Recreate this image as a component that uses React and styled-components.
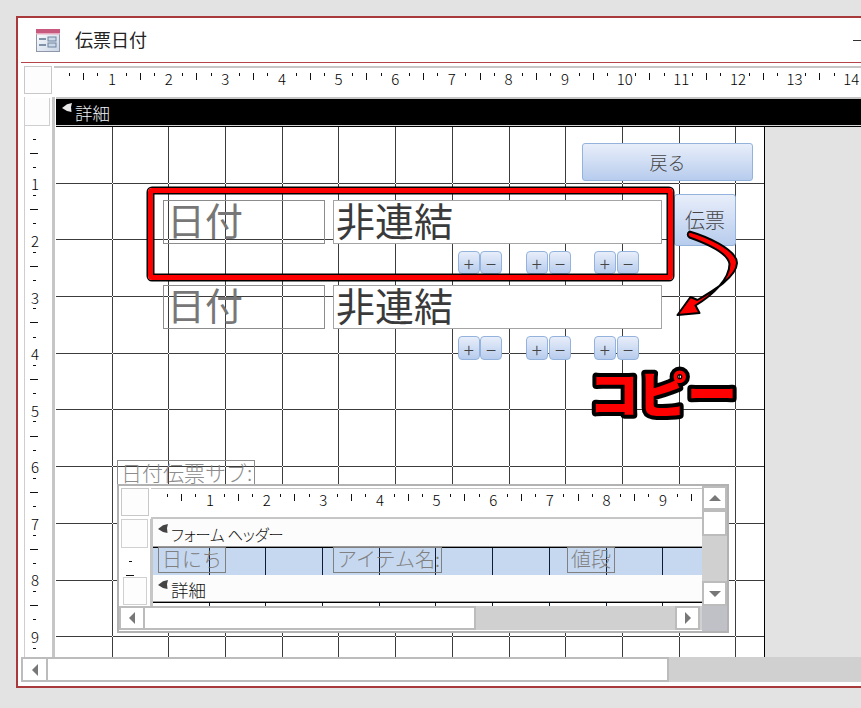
import React from "react";
import styled, { createGlobalStyle } from "styled-components";

const CJK = `"Noto Sans CJK JP", "Liberation Sans", sans-serif`;

const Global = createGlobalStyle`
  html, body { margin: 0; padding: 0; width: 861px; height: 708px; overflow: hidden; background: #e3e3e3; font-family: ${CJK}; }
  #root { width: 861px; height: 708px; overflow: hidden; }
  * { box-sizing: border-box; }
`;

const Page = styled.div`
  width: 861px; height: 708px; overflow: hidden; padding: 16px 0 0 16px; background: #e3e3e3;
`;
const Window = styled.div`
  width: 1000px; height: 672px; border: 2px solid #a83a3c; background: #fff;
  display: flex; flex-direction: column;
`;
const TitleBar = styled.div`
  width: 843px; height: 44px; flex: none; display: flex; align-items: center; padding-left: 18px; gap: 15px;
`;
const TitleText = styled.span`
  font-size: 18px; color: #222; line-height: 1; font-weight: 400; margin-top: -2px;
`;
const Minimize = styled.span`
  margin-left: auto; width: 8px; height: 1px; background: #333; margin-top: 1px;
`;
const TitleRule = styled.div`
  height: 1px; flex: none; margin-left: 3px; background: #b5444a;
`;
const Designer = styled.div`
  flex: none; height: 594px; padding: 3px 0 0 6px; display: flex; flex-direction: column;
`;
const TopRow = styled.div`
  height: 31px; flex: none; display: flex; gap: 2px;
`;
const Corner = styled.div`
  width: 28px; height: 28px; flex: none; background: #fdfdfd; border: 1px solid #c8c8c8;
`;
const HRuler = styled.div`
  flex: 1; height: 31px; border-top: 2px solid #c6c6c6; padding: 5px 0 0 8.5px; display: flex; align-items: flex-start; overflow: hidden;
`;
const RulerCell = styled.div`
  width: 14.165px; flex: none; display: flex; justify-content: center; height: 14px; position: relative;
`;
const TickV = styled.i`
  display: block; width: 1px; height: ${p => (p.$long ? 7 : 3)}px; background: #111;
`;
const Digit = styled.span`
  font-size: 15px; font-weight: 300; line-height: 12px; color: #000;
  white-space: nowrap; margin-left: ${p => (p.$wide ? 6 : 0)}px;
`;
const BodyRow = styled.div`
  flex: 1; display: flex; min-height: 0;
`;
const VRuler = styled.div`
  width: 31px; flex: none; border-left: 1px solid #cfcfcf; border-right: 3px solid #c6c6c6; overflow: hidden; padding-top: 1px;
`;
const VBox = styled.div`
  height: 28px; width: 25px; border: 1px solid #cfcfcf; background: #fdfdfd; border-left: none; border-top: none;
`;
const VTicks = styled.div`
  margin-top: 6px; display: flex; flex-direction: column;
`;
const VCell = styled.div`
  height: 14.15px; flex: none; display: flex; align-items: center; justify-content: center; width: 18px;
  position: relative;
`;
const TickH = styled.i`
  display: block; height: 1px; width: ${p => (p.$long ? 8 : 3)}px; background: #111;
`;
const VDigit = styled.span`
  font-size: 15px; font-weight: 300; line-height: 14px; color: #000; position: relative; top: 3px; left: 1px;
`;
const Main = styled.div`
  flex: 1; min-width: 0; display: flex; flex-direction: column; border-top: 2px solid #c6c6c6; margin-left: 1px;
`;
const DetailHeader = styled.div`
  height: 27px; flex: none; background: #000; border-bottom: 1px solid #d4d4d4; display: flex; align-items: flex-start; padding: 4px 0 0 6px; gap: 3px;
  color: #eef2f6; font-size: 17.5px; line-height: 20px; font-weight: 300;
`;
const Content = styled.div`
  flex: 1; display: flex; min-height: 0; border-top: 1px solid #000;
`;
const Canvas = styled.div`
  width: 709px; flex: none; position: relative; border-right: 1px solid #000; background: #fff; overflow: hidden;
`;
const Filler = styled.div`
  flex: 1; background: #e3e3e3;
`;
const Layer = styled.svg`
  position: absolute; left: 0; top: 0; display: block;
`;
const ScrollRow = styled.div`
  height: ${p => p.$h || 25}px; flex: none; display: flex; background: #d0d0d0; margin-left: ${p => p.$ml || 0}px;
`;
const ScrollBtn = styled.div`
  width: ${p => p.$w}px; height: ${p => p.$h}px; flex: none; background: #fff; border: 2px solid #bcbcbc;
  display: flex; align-items: center; justify-content: center;
`;
const ScrollThumb = styled.div`
  width: ${p => p.$w}px; height: ${p => p.$h || "auto"}px; flex: none; background: #fff; border: 2px solid #bcbcbc; border-left-width: ${p => (p.$v ? 2 : 0)}px;
`;
const Track = styled.div`
  flex: 1; background: #d0d0d0;
`;
const EndGap = styled.div`
  width: 2px; flex: none; background: #d0d0d0;
`;
const Tri = styled.i`
  display: block; width: 0; height: 0; border-style: solid; border-color: transparent;
  ${p => p.$d === "left" && "border-width: 6px 6px 6px 0; border-right-color: #777;"}
  ${p => p.$d === "right" && "border-width: 6px 0 6px 6px; border-left-color: #777;"}
  ${p => p.$d === "up" && "border-width: 0 6px 6px 6px; border-bottom-color: #777;"}
  ${p => p.$d === "down" && "border-width: 6px 6px 0 6px; border-top-color: #777;"}
`;
const WhiteGap = styled.div`
  flex: 1; background: #fff;
`;

/* Items on the free design canvas */
const Placed = styled.div`
  position: absolute;
  left: ${p => p.$x - 56}px; top: ${p => p.$y - 127}px;
  width: ${p => p.$w}px; height: ${p => p.$h}px;
`;
const LabelCtl = styled(Placed)`
  border: 1px solid #8c8c8c; color: #777; font-size: 38px; line-height: 36px; font-weight: 400; padding-left: 3px; white-space: nowrap;
`;
const TextCtl = styled(Placed)`
  border: 1px solid #a4a4a4; background: #fff; color: #3a3a3a; font-size: 39px; line-height: 36px; font-weight: 400; padding-left: 2px; white-space: nowrap;
`;
const BlueBtn = styled(Placed)`
  border: 1px solid #93b3dc; border-radius: ${p => p.$r || 3}px;
  background: linear-gradient(#e8eefa, #b7cced);
  color: #444; display: flex; align-items: center; justify-content: center; font-weight: 300; line-height: 1;
  font-size: ${p => p.$fs}px;
`;
const RedFrame = styled(Placed)`
  border: 5px solid #f00; border-radius: 4px; box-shadow: 0 0 0 1.5px #000, inset 0 0 0 1.5px #000;
`;
const SubLabel = styled(Placed)`
  border: 1px solid #8c8c8c; color: #8c8c8c; font-size: 21px; line-height: 23px; font-weight: 300; padding-left: 3px; white-space: nowrap;
`;

/* Subform */
const Subform = styled(Placed)`
  border: 2px solid #b2b2b2; background: #fff; display: grid; grid-template-columns: 1fr 25px; grid-template-rows: 120px 1fr;
`;
const SubMain = styled.div`
  display: flex; flex-direction: column; min-width: 0; overflow: hidden;
`;
const SubTop = styled.div`
  height: 33px; flex: none; display: flex; padding: 2px 0 0 2px; gap: 2px;
`;
const SubRuler = styled.div`
  flex: 1; border-top: 1px solid #c6c6c6; border-bottom: 2px solid #c6c6c6; padding: 5px 0 0 9.5px; display: flex; overflow: hidden; height: 31px;
`;
const SubBody = styled.div`
  flex: 1; display: flex; min-height: 0;
`;
const SubVRuler = styled.div`
  width: 34px; flex: none; border-right: 3px solid #c6c6c6; display: flex; flex-direction: column; padding-left: 2px;
`;
const SubVTicks = styled.div`
  height: 29px; flex: none; padding-top: 6px; display: flex; flex-direction: column;
`;
const SubBox = styled.div`
  width: ${p => p.$w}px; flex: none; height: ${p => p.$h}px; margin-left: ${p => p.$ml || 0}px; border: 1px solid #d0d0d0; background: #fdfdfd;
`;
const SubSections = styled.div`
  flex: 1; min-width: 0; display: flex; flex-direction: column;
`;
const SubHead = styled.div`
  height: ${p => p.$h}px; flex: none; background: #fcfcfc; display: flex; align-items: flex-start; padding: 5px 0 0 5px; gap: 3px;
  font-size: ${p => p.$fs}px; letter-spacing: ${p => p.$ls || 0}px; line-height: 20px; color: #111; font-feature-settings: "palt"; white-space: nowrap; font-weight: 300;
  border-bottom: 1px solid #999;
`;
const Band = styled.div`
  height: 28px; flex: none; position: relative; background: #c6d8f0; border-top: 1px solid #000;
`;
const BandLabel = styled.div`
  position: absolute; top: -1px; left: ${p => p.$x - 153}px; width: ${p => p.$w}px; height: 26px;
  border: 1px solid #808080; color: #808080; font-size: 20px; line-height: 22px; font-weight: 300; padding-left: 3px; white-space: nowrap;
`;
const SubFoot = styled.div`
  flex: 1; position: relative; border-top: 1px solid #000; background: #fff; overflow: hidden;
`;
const SubVScroll = styled.div`
  display: flex; flex-direction: column; background: #d0d0d0;
`;
const SubCorner = styled.div`
  background: #c0c1c7;
`;

const GX = [112, 168, 225, 282, 338, 395, 452, 509, 565, 622, 679, 735];
const GY = [183, 239, 296, 353, 409, 466, 523, 580, 636];
const SX = [209, 265, 322, 379, 435, 492, 549, 606, 662];

const GridLines = () => (
  <Layer width="708" height="530" viewBox="56 127 708 530" shapeRendering="crispEdges">
    {GY.map(y => <rect key={y} x="56" y={y} width="708" height="1" fill="#3c3c3c" />)}
    {GX.map(x => <rect key={x} x={x} y="127" width="1" height="530" fill="#3c3c3c" />)}
    {GX.flatMap(x => GY.map(y => <rect key={x + "-" + y} x={x} y={y} width="1" height="1" fill="#fff" />))}
  </Layer>
);

const SubLines = ({ h }) => (
  <Layer width="549" height={h} viewBox={`153 0 549 ${h}`} shapeRendering="crispEdges">
    {SX.map(x => <rect key={x} x={x} y="0" width="1" height={h} fill="#0e1c38" />)}
  </Layer>
);

const Overlay = () => (
  <Layer width="708" height="530" viewBox="56 127 708 530">
    <path
      d="M689.5 231.5 C705 236 736.5 249 737 263 C736.5 277 713 291 697.5 300 L690.5 297 L677.5 315 L699.5 313 L695.5 305.5 C713 295 729.5 279 729.5 264 C728 253 705 243 689.5 237.5 Q686 234.5 689.5 231.5 Z"
      fill="#f00" stroke="#000" strokeWidth="2" strokeLinejoin="round"
    />
    <text
      x="589" y="413" fontSize="50" fontWeight="900" letterSpacing="-1"
      fill="#f00" stroke="#000" strokeWidth="8" strokeLinejoin="round" paintOrder="stroke"
      fontFamily={CJK}
    >
      コピー
    </text>
  </Layer>
);

const Glyph = ({ fill }) => (
  <svg width="10" height="10" viewBox="0 0 10 10" style={{ flex: "none" }}>
    <path d="M0 5 L5 1.2 L10 0 L9 4 L9.5 9 L5 8 Z" fill={fill} />
  </svg>
);

const FormIcon = () => (
  <svg width="24" height="23" viewBox="0 0 24 23" style={{ flex: "none" }}>
    <defs>
      <linearGradient id="ib" x1="0" y1="0" x2="1" y2="1">
        <stop offset="0" stopColor="#ffffff" />
        <stop offset="1" stopColor="#c9d5e6" />
      </linearGradient>
    </defs>
    <rect x="0.5" y="0.5" width="23" height="22" fill="url(#ib)" stroke="#8f97a8" />
    <rect x="0" y="0" width="24" height="4" fill="#c7587e" />
    <rect x="0" y="4" width="24" height="1.5" fill="#e7a9bd" />
    <rect x="3" y="9" width="7" height="2" fill="#8092a8" />
    <rect x="3" y="15" width="7" height="2" fill="#8092a8" />
    <rect x="12" y="8" width="8" height="4" fill="#cdd8e6" stroke="#6f84a0" />
    <rect x="12" y="14" width="8" height="4" fill="#cdd8e6" stroke="#6f84a0" />
  </svg>
);

const hCells = (n) => {
  const out = [];
  for (let i = 0; i < n; i++) {
    const m = i % 4;
    const num = (i + 1) / 4;
    out.push(
      <RulerCell key={i}>
        {m === 3 ? <Digit $wide={num >= 10}>{num}</Digit> : <TickV $long={m === 1} />}
      </RulerCell>
    );
  }
  return out;
};

const vCells = (n) => {
  const out = [];
  for (let i = 0; i < n; i++) {
    const m = i % 4;
    out.push(
      <VCell key={i}>
        {m === 3 ? <VDigit>{(i + 1) / 4}</VDigit> : <TickH $long={m === 1} />}
      </VCell>
    );
  }
  return out;
};

const PlusMinus = ({ y, h }) =>
  [[458, 480], [526, 549], [594, 617]].flatMap(([a, b]) => [
    <BlueBtn key={"p" + a} $x={a} $y={y} $w={21.5} $h={h} $fs={19} $r={4}>+</BlueBtn>,
    <BlueBtn key={"m" + b} $x={b} $y={y} $w={22} $h={h} $fs={19} $r={4}>−</BlueBtn>,
  ]);

export default function App() {
  return (
    <Page>
      <Global />
      <Window>
        <TitleBar>
          <FormIcon />
          <TitleText>伝票日付</TitleText>
          <Minimize />
        </TitleBar>
        <TitleRule />
        <Designer>
          <TopRow>
            <Corner />
            <HRuler>{hCells(56)}</HRuler>
          </TopRow>
          <BodyRow>
            <VRuler>
              <VBox />
              <VTicks>{vCells(37)}</VTicks>
            </VRuler>
            <Main>
              <DetailHeader>
                <Glyph fill="#e8e8e8" />
                <span>詳細</span>
              </DetailHeader>
              <Content>
                <Canvas>
                  <GridLines />
                  <BlueBtn $x={582} $y={143} $w={171} $h={38} $fs={18}>戻る</BlueBtn>
                  <BlueBtn $x={674} $y={194} $w={62} $h={52} $fs={20}>伝票</BlueBtn>
                  <LabelCtl $x={163} $y={200} $w={162} $h={44}>日付</LabelCtl>
                  <TextCtl $x={333} $y={200} $w={329} $h={44}>非連結</TextCtl>
                  <PlusMinus y={251} h={23} />
                  <LabelCtl $x={163} $y={285} $w={162} $h={44}>日付</LabelCtl>
                  <TextCtl $x={333} $y={285} $w={329} $h={44}>非連結</TextCtl>
                  <PlusMinus y={336} h={24} />
                  <RedFrame $x={148} $y={188} $w={525} $h={92} />
                  <Overlay />
                  <SubLabel $x={117} $y={460} $w={138} $h={25}>日付伝票サブ:</SubLabel>
                  <Subform $x={117} $y={484} $w={612} $h={149}>
                    <SubMain>
                      <SubTop>
                        <Corner />
                        <SubRuler>{hCells(39)}</SubRuler>
                      </SubTop>
                      <SubBody>
                        <SubVRuler>
                          <SubBox $w={27} $h={29} />
                          <SubVTicks>
                            <VCell><TickH /></VCell>
                            <VCell><TickH $long /></VCell>
                          </SubVTicks>
                          <SubBox $w={24} $h={28} $ml={2} />
                        </SubVRuler>
                        <SubSections>
                          <SubHead $h={28} $fs={15.5} $ls={-0.3}>
                            <Glyph fill="#444" />
                            <span>フォーム ヘッダー</span>
                          </SubHead>
                          <Band>
                            <SubLines h={27} />
                            <BandLabel $x={158} $w={68}>日にち</BandLabel>
                            <BandLabel $x={333} $w={109}>アイテム名:</BandLabel>
                            <BandLabel $x={567} $w={48}>値段</BandLabel>
                          </Band>
                          <SubHead $h={27} $fs={17.5}>
                            <Glyph fill="#444" />
                            <span>詳細</span>
                          </SubHead>
                          <SubFoot><SubLines h={3} /></SubFoot>
                        </SubSections>
                      </SubBody>
                    </SubMain>
                    <SubVScroll>
                      <ScrollBtn $w={25} $h={24}><Tri $d="up" /></ScrollBtn>
                      <ScrollThumb $v $w={25} $h={26} />
                      <Track />
                      <ScrollBtn $w={25} $h={25}><Tri $d="down" /></ScrollBtn>
                    </SubVScroll>
                    <ScrollRow $h={24}>
                      <ScrollBtn $w={26} $h={24}><Tri $d="left" /></ScrollBtn>
                      <ScrollThumb $w={331} />
                      <Track />
                      <ScrollBtn $w={25} $h={24}><Tri $d="right" /></ScrollBtn>
                      <EndGap />
                    </ScrollRow>
                    <SubCorner />
                  </Subform>
                </Canvas>
                <Filler />
              </Content>
            </Main>
          </BodyRow>
        </Designer>
        <ScrollRow $ml={3}>
          <ScrollBtn $w={27} $h={25}><Tri $d="left" /></ScrollBtn>
          <ScrollThumb $w={621} />
          <Track />
        </ScrollRow>
        <WhiteGap />
      </Window>
    </Page>
  );
}
